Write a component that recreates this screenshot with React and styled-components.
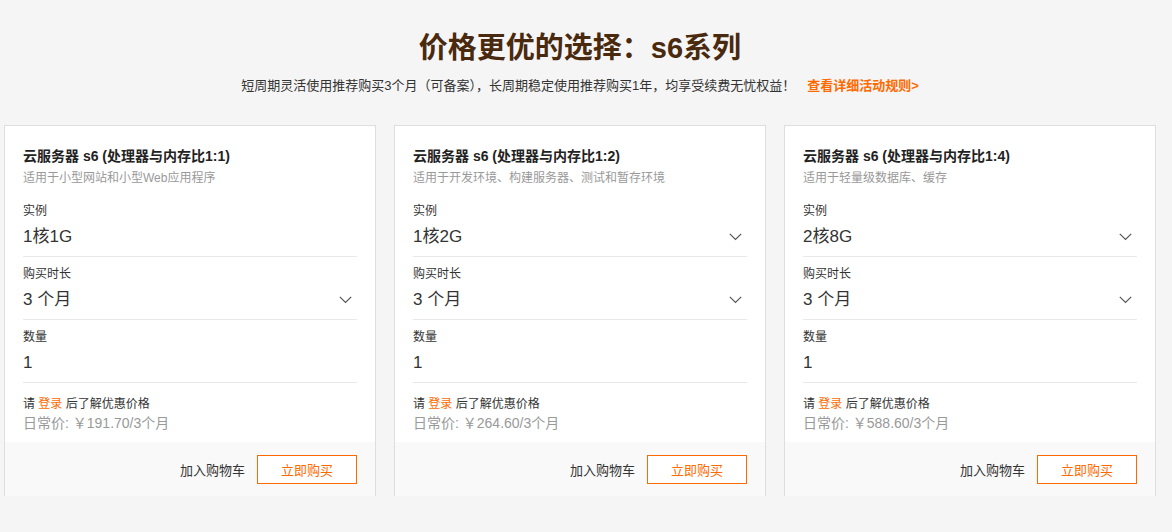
import React from "react";
import styled, { createGlobalStyle } from "styled-components";

const Global = createGlobalStyle`
  html, body { margin: 0; padding: 0; background: #f5f5f5; }
  body { font-family: "Liberation Sans", "Noto Sans CJK SC", Arial, sans-serif; color: #333; }
  * { box-sizing: border-box; }
`;

const Page = styled.div`
  width: 1172px;
  min-height: 532px;
  background: #f5f5f5;
  padding-top: 28px;
`;

const Heading = styled.h1`
  margin: 0;
  text-align: center;
  font-size: 29px;
  line-height: 40px;
  font-weight: 700;
  color: #4a2a0e;
  padding-right: 12px;
`;

const Sub = styled.p`
  margin: 8px 0 0;
  text-align: center;
  font-size: 13px;
  line-height: 20px;
  color: #333;
  padding-right: 12px;
`;

const RuleLink = styled.a`
  margin-left: 12px;
  color: #ff6a00;
  font-weight: 700;
  text-decoration: none;
`;

const Grid = styled.div`
  margin-top: 29px;
  padding-left: 4px;
  display: grid;
  grid-template-columns: repeat(3, 372px);
  column-gap: 18px;
`;

const Card = styled.div`
  background: #fff;
  border: 1px solid #dedede;
  border-bottom: none;
  display: flex;
  flex-direction: column;
`;

const Body = styled.div`
  padding: 20px 18px 9px;
`;

const CardTitle = styled.div`
  font-size: 14px;
  line-height: 20px;
  font-weight: 700;
  color: #222;
`;

const CardDesc = styled.div`
  margin-top: 3px;
  font-size: 12px;
  line-height: 18px;
  color: #999;
`;

const Fields = styled.div`
  margin-top: 7px;
`;

const Field = styled.div`
  padding: 8px 0 7px;
  border-bottom: 1px solid #e8e8e8;
`;

const Label = styled.div`
  font-size: 12px;
  line-height: 18px;
  color: #333;
`;

const Value = styled.div`
  margin-top: 5px;
  height: 24px;
  display: flex;
  align-items: center;
  justify-content: space-between;
  font-size: 17px;
  line-height: 24px;
  color: #333;
  padding-right: 5px;
`;

const Login = styled.div`
  margin-top: 12px;
  font-size: 12px;
  line-height: 18px;
  color: #333;
`;

const LoginLink = styled.span`
  color: #ff6a00;
`;

const Daily = styled.div`
  font-size: 14px;
  line-height: 20px;
  color: #999;
`;

const Footer = styled.div`
  height: 54px;
  background: #f9f9f9;
  display: flex;
  align-items: center;
  justify-content: flex-end;
  gap: 12px;
  padding: 0 18px 0;
`;

const Cart = styled.span`
  font-size: 13px;
  color: #333;
`;

const BuyButton = styled.button`
  width: 100px;
  height: 29px;
  border: 1px solid #ff6a00;
  background: #fff;
  color: #ff6a00;
  font-size: 13px;
  font-family: inherit;
  padding: 0;
  cursor: pointer;
`;

const Chevron = () => (
  <svg width="13" height="8" viewBox="0 0 13 8" fill="none">
    <path d="M0.8 0.8 L6.5 6.5 L12.2 0.8" stroke="#555" strokeWidth="1.2" />
  </svg>
);

const cards = [
  { ratio: "1:1", desc: "适用于小型网站和小型Web应用程序", inst: "1核1G", instSelect: false, price: "191.70" },
  { ratio: "1:2", desc: "适用于开发环境、构建服务器、测试和暂存环境", inst: "1核2G", instSelect: true, price: "264.60" },
  { ratio: "1:4", desc: "适用于轻量级数据库、缓存", inst: "2核8G", instSelect: true, price: "588.60" },
];

export default function App() {
  return (
    <Page>
      <Global />
      <Heading>价格更优的选择：s6系列</Heading>
      <Sub>
        短周期灵活使用推荐购买3个月（可备案），长周期稳定使用推荐购买1年，均享受续费无忧权益！
        <RuleLink href="#">查看详细活动规则&gt;</RuleLink>
      </Sub>
      <Grid>
        {cards.map((c) => (
          <Card key={c.ratio}>
            <Body>
              <CardTitle>云服务器 s6 (处理器与内存比{c.ratio})</CardTitle>
              <CardDesc>{c.desc}</CardDesc>
              <Fields>
                <Field>
                  <Label>实例</Label>
                  <Value>
                    {c.inst}
                    {c.instSelect && <Chevron />}
                  </Value>
                </Field>
                <Field>
                  <Label>购买时长</Label>
                  <Value>
                    3 个月
                    <Chevron />
                  </Value>
                </Field>
                <Field>
                  <Label>数量</Label>
                  <Value>1</Value>
                </Field>
              </Fields>
              <Login>
                请 <LoginLink>登录</LoginLink> 后了解优惠价格
              </Login>
              <Daily>日常价: ￥{c.price}/3个月</Daily>
            </Body>
            <Footer>
              <Cart>加入购物车</Cart>
              <BuyButton>立即购买</BuyButton>
            </Footer>
          </Card>
        ))}
      </Grid>
    </Page>
  );
}
